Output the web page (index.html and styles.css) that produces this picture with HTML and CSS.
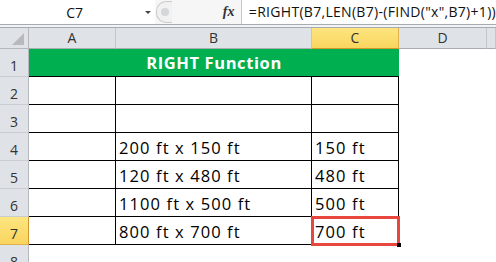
FILE: index.html
```html
<!DOCTYPE html>
<html lang="en">
<head>
    <meta charset="UTF-8">
    <meta name="viewport" content="width=device-width, initial-scale=1.0">
    <link rel="stylesheet" href="styles.css">
    <title>RIGHT Function</title>
</head>
<body>
    <div class="formula-bar">
        <div class="name-box">
            <span class="name">C7</span>
            <span class="arrow"></span>
        </div>
        <div class="splitter"><span class="knob"></span></div>
        <div class="fx">fx</div>
        <div class="formula">=RIGHT(B7,LEN(B7)-(FIND("x",B7)+1))</div>
    </div>
    <div class="bar-gap"></div>

    <div class="sheet">
        <!-- column headers -->
        <div class="corner">
            <svg width="12" height="12" viewBox="0 0 12 12"><polygon points="12,0 12,12 0,12" fill="#b7b9bc"/></svg>
        </div>
        <div class="col-head">A</div>
        <div class="col-head">B</div>
        <div class="col-head active">C</div>
        <div class="col-head">D</div>
        <div class="col-head"></div>

        <!-- row 1 -->
        <div class="row-head">1</div>
        <div class="title">RIGHT Function</div>
        <div class="cell"></div>
        <div class="cell"></div>

        <!-- row 2 -->
        <div class="row-head">2</div>
        <div class="cell t"></div>
        <div class="cell t"></div>
        <div class="cell t"></div>
        <div class="cell"></div>
        <div class="cell"></div>

        <!-- row 3 -->
        <div class="row-head">3</div>
        <div class="cell t"></div>
        <div class="cell t"></div>
        <div class="cell t"></div>
        <div class="cell"></div>
        <div class="cell"></div>

        <!-- row 4 -->
        <div class="row-head">4</div>
        <div class="cell t"></div>
        <div class="cell t">200 ft x 150 ft</div>
        <div class="cell t">150 ft</div>
        <div class="cell"></div>
        <div class="cell"></div>

        <!-- row 5 -->
        <div class="row-head">5</div>
        <div class="cell t"></div>
        <div class="cell t">120 ft x 480 ft</div>
        <div class="cell t">480 ft</div>
        <div class="cell"></div>
        <div class="cell"></div>

        <!-- row 6 -->
        <div class="row-head">6</div>
        <div class="cell t"></div>
        <div class="cell t">1100 ft x 500 ft</div>
        <div class="cell t">500 ft</div>
        <div class="cell"></div>
        <div class="cell"></div>

        <!-- row 7 -->
        <div class="row-head active">7</div>
        <div class="cell t"></div>
        <div class="cell t">800 ft x 700 ft</div>
        <div class="cell t selected">700 ft</div>
        <div class="cell"></div>
        <div class="cell"></div>

        <!-- row 8 -->
        <div class="row-head">8</div>
        <div class="cell"></div>
        <div class="cell"></div>
        <div class="cell"></div>
        <div class="cell"></div>
        <div class="cell"></div>
    </div>
</body>
</html>
```

FILE: styles.css
```css
body {
    margin: 0;
    width: 496px;
    height: 262px;
    overflow: hidden;
    background: #fff;
    font-family: "Open Sans", "Liberation Sans", sans-serif;
}

/* formula bar */
.formula-bar {
    display: flex;
    height: 24px;
    background: #fff;
    border-bottom: 1px solid #a6abb1;
}
.name-box {
    width: 158px;
    display: flex;
    align-items: center;
}
.name {
    flex: 1;
    text-align: center;
    font-size: 14px;
    color: #111;
    padding-left: 4px;
}
.arrow {
    width: 0;
    height: 0;
    margin-right: 4px;
    border-left: 3px solid transparent;
    border-right: 3px solid transparent;
    border-top: 3px solid #444;
}
.splitter {
    width: 87px;
    background: #f6f6f6;
    display: flex;
    align-items: center;
}
.knob {
    width: 15px;
    height: 20px;
    border: 1px solid #c8cacd;
    border-right: none;
    border-radius: 10px 0 0 10px;
    margin-left: 1px;
    background: #f1f1f1;
    position: relative;
}
.knob::after {
    content: '';
    position: absolute;
    left: 4px;
    top: 6px;
    width: 8px;
    height: 8px;
    border-radius: 50%;
    background: #d4d6d8;
}
.fx {
    width: 0;
    position: relative;
    left: -18px;
    font-family: "Liberation Serif", serif;
    font-style: italic;
    font-weight: bold;
    font-size: 14px;
    line-height: 24px;
    color: #333;
}
.formula {
    flex: 1;
    border-left: 1px solid #c6c8cb;
    padding-left: 7px;
    font-size: 14px;
    letter-spacing: 0.3px;
    line-height: 24px;
    color: #111;
    white-space: nowrap;
}
.bar-gap {
    height: 2px;
    background: #f3f4f6;
    border-bottom: 1px solid #a6abb1;
}

/* grid */
.sheet {
    display: grid;
    grid-template-columns: 29px 87px 196px 87px 88px 1fr;
    grid-template-rows: 21px;
    grid-auto-rows: 28px;
}
.sheet > div {
    box-sizing: border-box;
}
.corner {
    background: #dfe3e8;
    border-right: 1px solid #b5b9be;
    border-bottom: 1px solid #b5b9be;
    display: flex;
    align-items: flex-end;
    justify-content: flex-end;
    padding: 0 4px 3px 0;
}
.corner svg {
    display: block;
}
.col-head {
    background: #dfe3e8;
    border-right: 1px solid #c3c7cc;
    border-bottom: 1px solid #a9adb2;
    text-align: center;
    font-size: 14px;
    line-height: 20px;
    color: #333;
}
.col-head.active {
    background: linear-gradient(#fde57f, #f9d55f);
    border-right-color: #e0b04a;
    border-bottom: 1px solid #d4982a;
}
.row-head {
    background: #dfe3e8;
    border-right: 1px solid #b5b9be;
    border-bottom: 1px solid #c8ccd1;
    text-align: center;
    font-size: 14px;
    line-height: 33px;
    color: #333;
}
.row-head.active {
    background: linear-gradient(#fde57f, #f9d55f);
    border-right-color: #d4982a;
    border-bottom-color: #e0b04a;
}

.title {
    grid-column: span 3;
    background: #00b050;
    border-bottom: 1px solid #000;
    color: #fff;
    font-weight: bold;
    font-size: 16.5px;
    letter-spacing: 0.6px;
    text-align: center;
    line-height: 28px;
}
.cell {
    font-size: 16.5px;
    letter-spacing: 1.1px;
    color: #000;
    padding-left: 3px;
    line-height: 30px;
    white-space: nowrap;
}
.cell.t {
    border-right: 1px solid #000;
    border-bottom: 1px solid #000;
}

/* active cell outline */
.cell.selected {
    position: relative;
}
.cell.selected::after {
    content: '';
    position: absolute;
    left: -1px;
    top: -1px;
    right: -2px;
    bottom: -2px;
    border: 3px solid #e7473c;
}
.cell.selected::before {
    content: '';
    position: absolute;
    right: -3px;
    bottom: -3px;
    width: 4px;
    height: 4px;
    background: #000;
    z-index: 1;
}
```
